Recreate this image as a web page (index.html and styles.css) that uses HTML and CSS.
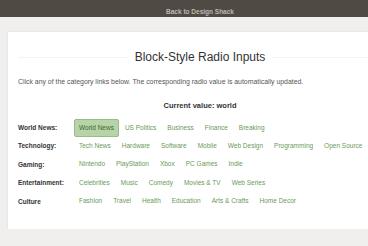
FILE: index.html
```html
<!DOCTYPE html>
<html lang="en">
<head>
    <meta charset="UTF-8">
    <meta name="viewport" content="width=device-width, initial-scale=1.0">
    <title>Block-Style Radio Inputs</title>
    <link rel="stylesheet" href="styles.css">
</head>
<body>
    <div class="page">
        <div class="topbar"><a href="#">Back to Design Shack</a></div>

        <div class="card">
            <h1><span>Block-Style Radio Inputs</span></h1>
            <p class="intro">Click any of the category links below. The corresponding radio value is automatically updated.</p>
            <p class="current">Current value: <span id="current">world</span></p>

            <form class="groups">
                <!-- World News -->
                <div class="group">
                    <div class="group-label">World News:</div>
                    <div class="options">
                        <a class="option selected" data-value="world">World News</a>
                        <a class="option" data-value="politics">US Politics</a>
                        <a class="option" data-value="business">Business</a>
                        <a class="option" data-value="finance">Finance</a>
                        <a class="option" data-value="breaking">Breaking</a>
                    </div>
                </div>

                <!-- Technology -->
                <div class="group">
                    <div class="group-label">Technology:</div>
                    <div class="options">
                        <a class="option" data-value="technews">Tech News</a>
                        <a class="option" data-value="hardware">Hardware</a>
                        <a class="option" data-value="software">Software</a>
                        <a class="option" data-value="mobile">Mobile</a>
                        <a class="option" data-value="webdesign">Web Design</a>
                        <a class="option" data-value="programming">Programming</a>
                        <a class="option" data-value="opensource">Open Source</a>
                    </div>
                </div>

                <!-- Gaming -->
                <div class="group">
                    <div class="group-label">Gaming:</div>
                    <div class="options">
                        <a class="option" data-value="nintendo">Nintendo</a>
                        <a class="option" data-value="playstation">PlayStation</a>
                        <a class="option" data-value="xbox">Xbox</a>
                        <a class="option" data-value="pcgames">PC Games</a>
                        <a class="option" data-value="indie">Indie</a>
                    </div>
                </div>

                <!-- Entertainment -->
                <div class="group">
                    <div class="group-label">Entertainment:</div>
                    <div class="options">
                        <a class="option" data-value="celebrities">Celebrities</a>
                        <a class="option" data-value="music">Music</a>
                        <a class="option" data-value="comedy">Comedy</a>
                        <a class="option" data-value="movies">Movies &amp; TV</a>
                        <a class="option" data-value="webseries">Web Series</a>
                    </div>
                </div>

                <!-- Culture -->
                <div class="group">
                    <div class="group-label">Culture</div>
                    <div class="options">
                        <a class="option" data-value="fashion">Fashion</a>
                        <a class="option" data-value="travel">Travel</a>
                        <a class="option" data-value="health">Health</a>
                        <a class="option" data-value="education">Education</a>
                        <a class="option" data-value="arts">Arts &amp; Crafts</a>
                        <a class="option" data-value="homedecor">Home Decor</a>
                    </div>
                </div>
            </form>
        </div>
    </div>

    <script>
        // Select an option and show its value
        document.querySelectorAll('.option').forEach(option => {
            option.addEventListener('click', function() {
                document.querySelectorAll('.option').forEach(o => o.classList.remove('selected'));
                this.classList.add('selected');
                document.getElementById('current').textContent = this.getAttribute('data-value');
            });
        });
    </script>
</body>
</html>
```

FILE: styles.css
```css
body {
    font-family: "Liberation Sans", Arial, sans-serif;
    background-color: #f0efee;
    margin: 0;
    padding: 0;
    overflow: hidden;
}

.page {
    width: 400px;
}

.topbar {
    height: 17px;
    line-height: 17px;
    background-color: #4f4a43;
    text-align: center;
}

.topbar a {
    color: #bcb7b1;
    font-size: 6.5px;
    font-weight: bold;
    text-decoration: none;
}

.card {
    margin: 15px 8px 0;
    height: 197px;
    padding: 0 10px;
    box-sizing: border-box;
    background-color: white;
    box-shadow: 0 0 2px rgba(0, 0, 0, 0.08);
    overflow: hidden;
}

h1 {
    display: flex;
    align-items: center;
    gap: 7px;
    margin: 0;
    padding-top: 18px;
    font-size: 12px;
    font-weight: normal;
    line-height: 14px;
    color: #333;
}

h1::before,
h1::after {
    content: "";
    flex: 1;
    border-top: 1px solid #f4f4f4;
}

.intro {
    margin: 13px 0 0;
    font-size: 6.9px;
    line-height: 9px;
    color: #555;
}

.current {
    margin: 15px 0 0;
    text-align: center;
    font-size: 7.5px;
    font-weight: bold;
    line-height: 9px;
    color: #333;
}

.groups {
    margin-top: 9.5px;
    display: flex;
    flex-direction: column;
    gap: 2.4px;
}

.group {
    display: flex;
    align-items: center;
}

.group-label {
    width: 57px;
    font-size: 6.5px;
    font-weight: bold;
    color: #333;
}

.options {
    display: flex;
    gap: 3px;
}

.option {
    padding: 4px;
    line-height: 8px;
    font-size: 6.5px;
    color: #6a9a5a;
    border: 1px solid transparent;
    border-radius: 2px;
    margin: -1px;
    cursor: pointer;
}

.option.selected {
    background-color: #b6d4a7;
    border-color: #96bc87;
    color: #3d6831;
}
```
